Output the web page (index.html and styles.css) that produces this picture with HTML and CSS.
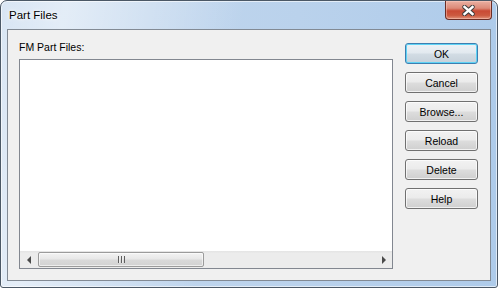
FILE: index.html
```html
<!DOCTYPE html>
<html lang="en">

<head>
  <meta charset="UTF-8">
  <title>Part Files</title>
  <link rel="stylesheet" href="styles.css">
</head>

<body>
  <div class="window">
    <div class="titlebar">
      <span class="title">Part Files</span>
      <div class="close-btn">
        <svg width="13" height="11" viewBox="0 0 13 11">
          <path d="M2.5 2 L10.5 9 M10.5 2 L2.5 9" stroke="#3b3b3b" stroke-width="4.4" stroke-linecap="round" />
          <path d="M2.5 2 L10.5 9 M10.5 2 L2.5 9" stroke="#ffffff" stroke-width="2.4" stroke-linecap="square" />
        </svg>
      </div>
    </div>
    <div class="client">
      <div class="list-col">
        <div class="label">FM Part Files:</div>
        <div class="listbox">
          <div class="list-area"></div>
          <div class="hscroll">
            <div class="arrow-btn"><span class="arrow-left"></span></div>
            <div class="thumb"><span class="grip"></span></div>
            <div class="track"></div>
            <div class="arrow-btn"><span class="arrow-right"></span></div>
          </div>
        </div>
      </div>
      <div class="btn-col">
        <button class="btn btn-default">OK</button>
        <button class="btn">Cancel</button>
        <button class="btn">Browse...</button>
        <button class="btn">Reload</button>
        <button class="btn">Delete</button>
        <button class="btn">Help</button>
      </div>
    </div>
  </div>
</body>

</html>
```

FILE: styles.css
```css
body {
  margin: 0;
  font-family: "Liberation Sans", Arial, sans-serif;
}

.window {
  width: 498px;
  height: 288px;
  box-sizing: border-box;
  border: 1px solid #4b5866;
  border-radius: 7px 7px 3px 3px;
  padding: 0 6px 6px 6px;
  display: flex;
  flex-direction: column;
  background:
    linear-gradient(100deg, rgba(255, 255, 255, 0.35) 0%, rgba(255, 255, 255, 0.55) 12%, rgba(255, 255, 255, 0) 45%),
    linear-gradient(to right, #c4d8ee 0%, #bad2ec 60%, #aecbea 100%);
  box-shadow: inset 0 0 0 1px rgba(255, 255, 255, 0.6);
}

.titlebar {
  height: 28px;
  display: flex;
  align-items: flex-start;
}

.title {
  font-size: 11.5px;
  color: #000;
  margin-left: 2px;
  margin-top: 8px;
  text-shadow: 0 0 6px #fff, 0 0 3px #fff;
}

.close-btn {
  margin-left: auto;
  margin-right: -1px;
  width: 47px;
  height: 19px;
  box-sizing: border-box;
  border: 1px solid #6b2d25;
  border-top: none;
  border-radius: 0 0 4px 4px;
  background: linear-gradient(to bottom, #eab0a2 0%, #dc8a78 40%, #c94a34 55%, #cc5a40 80%, #e0927a 100%);
  box-shadow: inset 0 0 0 1px rgba(255, 210, 200, 0.45);
  display: flex;
  align-items: center;
  justify-content: center;
}

.close-btn svg {
  display: block;
  margin-top: 1px;
}

.client {
  flex: 1;
  box-sizing: border-box;
  border: 1px solid #828a94;
  background: #f0f0f0;
  display: flex;
  padding: 11px 12px 11px 11px;
}

.list-col {
  display: flex;
  flex-direction: column;
}

.label {
  font-size: 10.5px;
  line-height: 13px;
  color: #000;
  margin-bottom: 5px;
}

.listbox {
  width: 374px;
  height: 210px;
  box-sizing: border-box;
  border: 1px solid #828790;
  background: #fff;
  display: flex;
  flex-direction: column;
}

.list-area {
  flex: 1;
}

.hscroll {
  height: 17px;
  display: flex;
  align-items: center;
  background: linear-gradient(to bottom, #e4e4e4 0%, #ececec 15%, #ececec 100%);
}

.arrow-btn {
  width: 17px;
  height: 17px;
  display: flex;
  align-items: center;
  justify-content: center;
}

.arrow-left {
  width: 0;
  height: 0;
  border-top: 4px solid transparent;
  border-bottom: 4px solid transparent;
  border-right: 4px solid #4a4a4a;
}

.arrow-right {
  width: 0;
  height: 0;
  border-top: 4px solid transparent;
  border-bottom: 4px solid transparent;
  border-left: 4px solid #4a4a4a;
}

.thumb {
  width: 166px;
  height: 15px;
  margin-left: 1px;
  box-sizing: border-box;
  border: 1px solid #9b9b9b;
  border-radius: 2px;
  background: linear-gradient(to bottom, #f3f3f3 0%, #e8e8e8 45%, #d9d9d9 55%, #d2d2d2 100%);
  box-shadow: inset 0 0 0 1px rgba(255, 255, 255, 0.6);
  display: flex;
  align-items: center;
  justify-content: center;
}

.grip {
  width: 7px;
  height: 7px;
  background: repeating-linear-gradient(to right, #5e5e5e 0, #5e5e5e 1px, #eeeeee 1px, #eeeeee 2px, transparent 2px, transparent 3px);
}

.track {
  flex: 1;
}

.btn-col {
  display: flex;
  flex-direction: column;
  gap: 8px;
  margin-left: 12px;
  margin-top: 2px;
}

.btn {
  width: 73px;
  height: 21px;
  box-sizing: border-box;
  border: 1px solid #707070;
  border-radius: 3px;
  background: linear-gradient(to bottom, #f2f2f2 0%, #ebebeb 48%, #dddddd 52%, #cfcfcf 100%);
  box-shadow: inset 0 0 0 1px rgba(255, 255, 255, 0.7);
  font-family: "Liberation Sans", Arial, sans-serif;
  font-size: 10.5px;
  color: #000;
  padding: 0;
  cursor: pointer;
}

.btn-default {
  border-color: #3c7fb1;
  background: linear-gradient(to bottom, #edf2f6 0%, #e2e9ef 48%, #d2dce4 52%, #c6d1da 100%);
  box-shadow: inset 0 0 0 1px #5fd3f5;
}
```
